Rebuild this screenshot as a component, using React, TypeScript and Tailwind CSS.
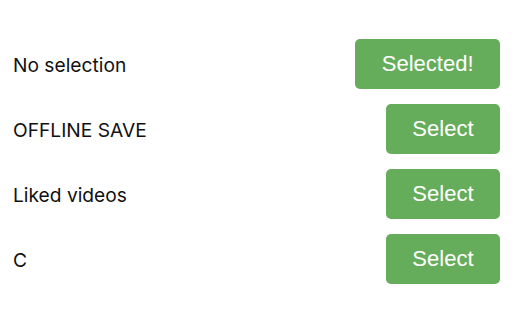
import React from "react";

const rows = [
  { label: "No selection", selected: true },
  { label: "OFFLINE SAVE", selected: false },
  { label: "Liked videos", selected: false },
  { label: "C", selected: false },
];

export default function App() {
  return (
    <div className="w-[512px] h-[320px] bg-white pt-[39px] pl-[13px] pr-[12px] flex flex-col gap-[15px]">
      {rows.map((r) => (
        <div key={r.label} className="flex items-center justify-between h-[50px]">
          <span
            className="text-[19.2px] text-[#111] leading-none pt-[3px]"
            style={{ fontFamily: 'Inter, "Liberation Sans", sans-serif' }}
          >
            {r.label}
          </span>
          <button
            className="h-[50px] px-[26.5px] rounded-[5px] bg-[#66ad5b] text-white text-[22px] leading-none"
            style={{ fontFamily: '"Liberation Sans", Arial, sans-serif' }}
          >
            {r.selected ? "Selected!" : "Select"}
          </button>
        </div>
      ))}
    </div>
  );
}
